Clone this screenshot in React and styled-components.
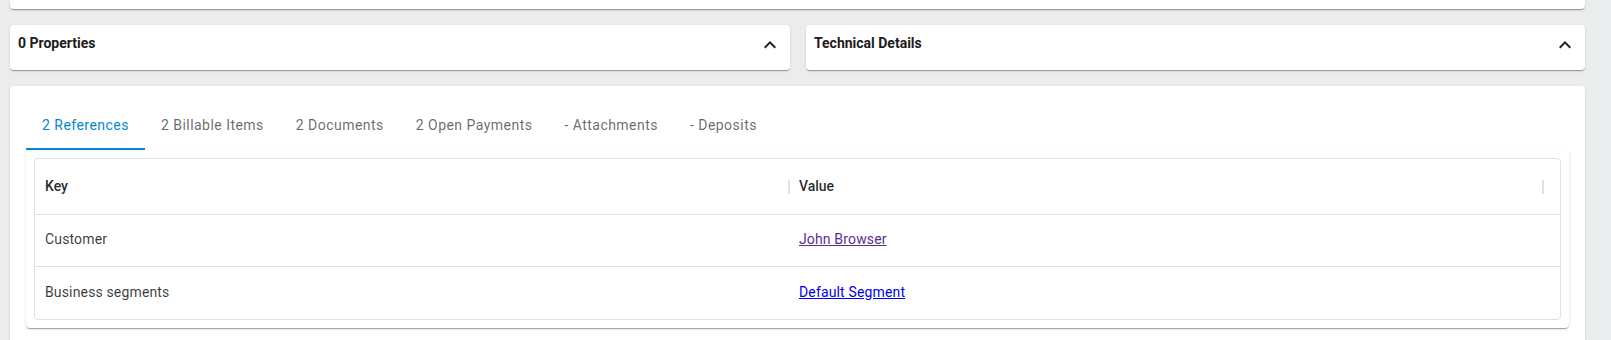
import React from 'react';
import styled, { createGlobalStyle } from 'styled-components';

const GlobalStyle = createGlobalStyle`
  body {
    margin: 0;
    background: #ebecee;
    font-family: Roboto, 'Liberation Sans', sans-serif;
  }
`;

const paperShadow =
  '0 2px 1px -1px rgba(0,0,0,.2), 0 1px 1px 0 rgba(0,0,0,.14), 0 1px 3px 0 rgba(0,0,0,.12)';

const Page = styled.div`
  display: flex;
  flex-direction: column;
  gap: 16px;
  padding: 0 26px 0 10px;
`;

const TopCard = styled.div`
  height: 9px;
  background: #fff;
  border-radius: 0 0 4px 4px;
  box-shadow: ${paperShadow};
`;

const SummaryGrid = styled.div`
  display: grid;
  grid-template-columns: 780px 1fr;
  gap: 16px;
`;

const Card = styled.div`
  background: #fff;
  border-radius: 4px;
  box-shadow: ${paperShadow};
  padding: 8px 8px 13px;
`;

const CardHeader = styled.div`
  display: flex;
  justify-content: space-between;
  align-items: flex-start;
`;

const CardTitle = styled.h3`
  margin: 0;
  font-size: 14px;
  line-height: 20px;
  font-weight: 700;
  color: #1c1c1c;
`;

const IconButton = styled.button`
  display: flex;
  width: 24px;
  height: 24px;
  padding: 0;
  border: 0;
  background: none;
  color: #1f1f1f;
`;

const DetailCard = styled.div`
  background: #fff;
  border-radius: 4px;
  box-shadow: ${paperShadow};
  padding: 16px;
`;

const TabList = styled.div`
  display: flex;
  height: 48px;
`;

const Tab = styled.button`
  padding: 11px 16px 13px;
  border: 0;
  background: none;
  font-family: inherit;
  font-size: 14px;
  font-weight: 400;
  letter-spacing: 0.47px;
  color: ${(p) => (p.$active ? '#0288d1' : 'rgba(0,0,0,0.6)')};
  box-shadow: ${(p) => (p.$active ? 'inset 0 -2px 0 #0288d1' : 'none')};
  white-space: nowrap;
`;

const Panel = styled.div`
  background: #fff;
  border-radius: 0 0 4px 4px;
  box-shadow: ${paperShadow};
  padding: 8px;
`;

const Table = styled.div`
  border: 1px solid #e0e0e0;
  border-radius: 4px;
  font-size: 14px;
`;

const Row = styled.div`
  display: grid;
  grid-template-columns: 754px 754px 1fr;
  align-items: center;
  height: ${(p) => (p.$header ? '56px' : '52px')};
  box-sizing: border-box;
  border-bottom: 1px solid #e0e0e0;

  &:last-child {
    border-bottom: 0;
  }
`;

const HeaderCell = styled.div`
  display: flex;
  align-items: center;
  justify-content: space-between;
  padding-left: 10px;
  font-weight: 500;
  color: rgba(0,0,0,0.85);
`;

const HeaderLabel = styled.span`
  margin-top: -2px;
`;

const Separator = styled.span`
  width: 2px;
  height: 14px;
  background: #e0e0e0;
  margin-right: -1px;
`;

const Cell = styled.div`
  padding: 0 0 3px 10px;
  color: rgba(0,0,0,0.78);
  letter-spacing: 0.15px;
`;

const Link = styled.a`
  color: ${(p) => (p.$visited ? '#5c2d91' : '#0000ee')};
  text-decoration: underline;
`;

const ChevronUp = () => (
  <svg width="24" height="24" viewBox="0 0 24 24" fill="currentColor">
    <path d="M12 8l-6 6 1.41 1.41L12 10.83l4.59 4.58L18 14z" />
  </svg>
);

const SummaryCard = ({ title }) => (
  <Card>
    <CardHeader>
      <CardTitle>{title}</CardTitle>
      <IconButton aria-label="collapse">
        <ChevronUp />
      </IconButton>
    </CardHeader>
  </Card>
);

const tabs = [
  '2 References',
  '2 Billable Items',
  '2 Documents',
  '2 Open Payments',
  '- Attachments',
  '- Deposits',
];

const references = [
  { key: 'Customer', value: 'John Browser', visited: true },
  { key: 'Business segments', value: 'Default Segment', visited: false },
];

export default function App() {
  return (
    <>
      <GlobalStyle />
      <Page>
        <TopCard />
        <SummaryGrid>
          <SummaryCard title="0 Properties" />
          <SummaryCard title="Technical Details" />
        </SummaryGrid>
        <DetailCard>
          <TabList>
            {tabs.map((t, i) => (
              <Tab key={t} $active={i === 0}>
                {t}
              </Tab>
            ))}
          </TabList>
          <Panel>
            <Table>
              <Row $header>
                <HeaderCell>
                  <HeaderLabel>Key</HeaderLabel>
                  <Separator />
                </HeaderCell>
                <HeaderCell>
                  <HeaderLabel>Value</HeaderLabel>
                  <Separator />
                </HeaderCell>
              </Row>
              {references.map((r) => (
                <Row key={r.key}>
                  <Cell>{r.key}</Cell>
                  <Cell>
                    <Link href="#" $visited={r.visited}>
                      {r.value}
                    </Link>
                  </Cell>
                </Row>
              ))}
            </Table>
          </Panel>
        </DetailCard>
      </Page>
    </>
  );
}
